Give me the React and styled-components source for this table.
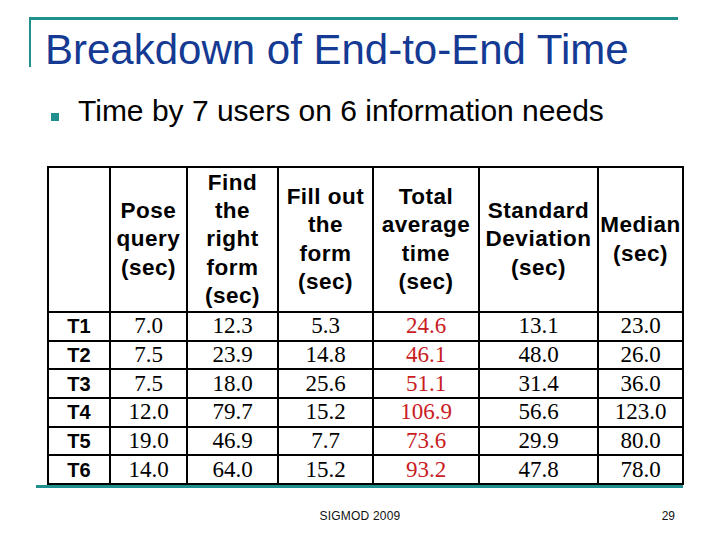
import React from "react";
import styled, { createGlobalStyle } from "styled-components";

const TEAL = "#20908e";

const Global = createGlobalStyle`
  html, body { margin: 0; padding: 0; background: #ffffff; }
  body { font-family: "Liberation Sans", Arial, sans-serif; }
`;

const Slide = styled.div`
  width: 720px;
  height: 540px;
  overflow: hidden;
  background: #ffffff;
  display: flex;
  flex-direction: column;
`;

const TitleFrame = styled.header`
  margin: 17px 42px 0 29px;
  height: 47px;
  border-top: 3px solid ${TEAL};
  border-left: 2px solid ${TEAL};
  box-sizing: content-box;
`;

const Title = styled.h1`
  margin: 0;
  padding: 9px 0 0 14px;
  font-family: "Liberation Sans", Arial, sans-serif;
  font-weight: 400;
  font-size: 42px;
  line-height: 42px;
  color: #153a93;
  white-space: nowrap;
`;

const BulletRow = styled.div`
  margin: 29px 0 0 51px;
  display: flex;
  align-items: flex-start;
  gap: 19px;
`;

const Bullet = styled.span`
  width: 8px;
  height: 8px;
  margin-top: 17px;
  background: ${TEAL};
  flex: none;
`;

const BulletText = styled.p`
  margin: 0;
  font-size: 30px;
  line-height: 30px;
  color: #000000;
  white-space: nowrap;
`;

const Table = styled.table`
  margin: 40px 0 0 47px;
  width: 637px;
  table-layout: fixed;
  border-collapse: collapse;
  border: 2px solid #000000;
`;

const HeadCell = styled.th`
  border: 2px solid #000000;
  padding: 0;
  height: 143px;
  text-align: center;
  vertical-align: middle;
  font-family: "Liberation Sans", Arial, sans-serif;
  font-weight: 700;
  font-size: 22.5px;
  letter-spacing: 0.5px;
  line-height: 28.3px;
  white-space: nowrap;
  color: #000000;
`;

const Row = styled.tr`
  height: 28.67px;
`;

const LabelCell = styled.th`
  border: 2px solid #000000;
  padding: 0;
  text-align: center;
  vertical-align: middle;
  font-family: "Liberation Sans", Arial, sans-serif;
  font-weight: 700;
  font-size: 20px;
  line-height: 24px;
  color: #000000;
`;

const DataCell = styled.td`
  border: 2px solid #000000;
  padding: 0;
  text-align: center;
  vertical-align: middle;
  font-family: "Liberation Serif", "Times New Roman", serif;
  font-size: 23px;
  line-height: 24px;
  color: ${(p) => (p.$accent ? "#c8201f" : "#000000")};
`;

const Rule = styled.div`
  margin: 0 0 0 36px;
  width: 647px;
  height: 3px;
  background: ${TEAL};
`;

const Footer = styled.footer`
  margin-top: 22px;
  display: grid;
  grid-template-columns: 1fr auto 1fr;
  font-size: 12px;
  line-height: 12px;
  color: #111111;
`;

const FooterCenter = styled.span`
  grid-column: 2;
  letter-spacing: 0.2px;
`;

const PageNum = styled.span`
  grid-column: 3;
  justify-self: end;
  padding-right: 45px;
`;

const cols = [62, 77, 91, 95, 106, 119, 85];

const headers = [
  [],
  ["Pose", "query", "(sec)"],
  ["Find", "the", "right", "form", "(sec)"],
  ["Fill out", "the", "form", "(sec)"],
  ["Total", "average", "time", "(sec)"],
  ["Standard", "Deviation", "(sec)"],
  ["Median", "(sec)"],
];

const rows = [
  ["T1", "7.0", "12.3", "5.3", "24.6", "13.1", "23.0"],
  ["T2", "7.5", "23.9", "14.8", "46.1", "48.0", "26.0"],
  ["T3", "7.5", "18.0", "25.6", "51.1", "31.4", "36.0"],
  ["T4", "12.0", "79.7", "15.2", "106.9", "56.6", "123.0"],
  ["T5", "19.0", "46.9", "7.7", "73.6", "29.9", "80.0"],
  ["T6", "14.0", "64.0", "15.2", "93.2", "47.8", "78.0"],
];

export default function App() {
  return (
    <>
      <Global />
      <Slide>
        <TitleFrame>
          <Title>Breakdown of End-to-End Time</Title>
        </TitleFrame>
        <BulletRow>
          <Bullet />
          <BulletText>Time by 7 users on 6 information needs</BulletText>
        </BulletRow>
        <Table>
          <colgroup>
            {cols.map((w, i) => (
              <col key={i} style={{ width: w }} />
            ))}
          </colgroup>
          <thead>
            <tr>
              {headers.map((lines, i) => (
                <HeadCell key={i}>
                  {lines.map((l, j) => (
                    <React.Fragment key={j}>
                      {j > 0 && <br />}
                      {l}
                    </React.Fragment>
                  ))}
                </HeadCell>
              ))}
            </tr>
          </thead>
          <tbody>
            {rows.map((r) => (
              <Row key={r[0]}>
                <LabelCell>{r[0]}</LabelCell>
                {r.slice(1).map((v, i) => (
                  <DataCell key={i} $accent={i === 3}>
                    {v}
                  </DataCell>
                ))}
              </Row>
            ))}
          </tbody>
        </Table>
        <Rule />
        <Footer>
          <FooterCenter>SIGMOD 2009</FooterCenter>
          <PageNum>29</PageNum>
        </Footer>
      </Slide>
    </>
  );
}
